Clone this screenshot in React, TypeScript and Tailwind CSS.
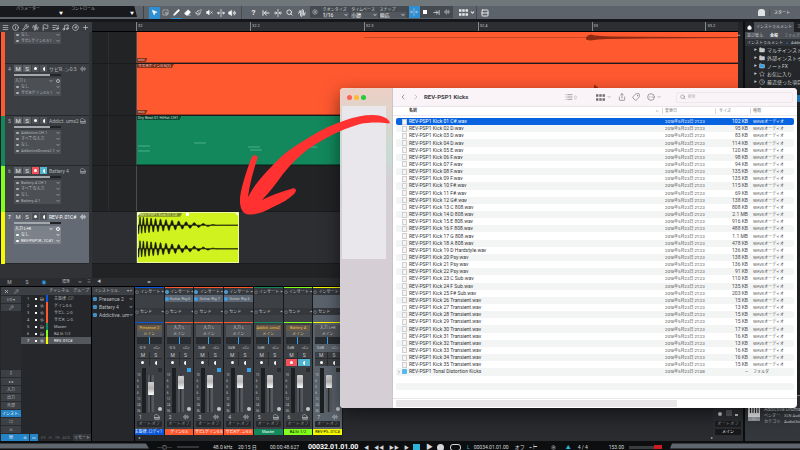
import type { ReactNode } from "react";
import {
  ArrowLeftToLine,
  AudioLines,
  AudioWaveform,
  ChevronLeft,
  ChevronRight,
  ChevronsUpDown,
  ChevronDown,
  ChevronUp,
  CircleEllipsis,
  CircleGauge,
  Clock,
  Eraser,
  Flag,
  FoldHorizontal,
  Folder,
  Home,
  Info,
  List,
  ListMusic,
  Menu,
  MousePointer2,
  Music,
  Paintbrush,
  Pencil,
  Piano,
  Plus,
  Power,
  Rows2,
  Search,
  Settings,
  Share,
  SquareDashedMousePointer,
  Star,
  Tag,
  UnfoldHorizontal,
  Volume2,
  VolumeX,
  Wrench,
  X,
} from "lucide-react";

type Track = {
  no: number;
  name: string;
  height: string;
  color: string;
  fields: string[];
  kind: "audio" | "midi";
  armed?: boolean;
  selected?: boolean;
  partial?: boolean;
};

const tracks: Track[] = [
  { no: 3, name: "サビL..ン0.5", height: "h-[32px]", color: "bg-[#ff5930]", fields: ["なし", "サビLゲイン0.5 1"], kind: "audio", partial: true },
  { no: 4, name: "サビR..ン0.5", height: "h-[52px]", color: "bg-[#ff5930]", fields: ["入力 L", "なし", "サビRゲイン0.5 1"], kind: "audio" },
  { no: 5, name: "Addict..ums2", height: "h-[50px]", color: "bg-[#12885c]", fields: ["Addictive   CH 1", "すべての入力", "なし", "AddictiveDrums2.1"], kind: "midi" },
  { no: 6, name: "Battery 4", height: "h-[46px]", color: "bg-[#83ff1c]", fields: ["Battery 4   CH 1", "すべての入力", "なし", "Battery 4.1"], kind: "midi", armed: true },
  { no: 7, name: "REV-P..01C#", height: "h-[52px]", color: "bg-[#f6fa00]", fields: ["入力 L+R", "なし", "REV-PSP1K..1C#1"], kind: "audio", selected: true },
];

type Channel = {
  no: number;
  list: string;
  label: string;
  top: string;
  color: string;
  text: string;
  instrument?: boolean;
  insert?: string;
  db: string;
  level: number;
  armed?: boolean;
  selected?: boolean;
};

const channels: Channel[] = [
  { no: 1, list: "主旋律..ロ）", label: "主旋律..ロディ）", top: "Presence 2", color: "bg-[#0a57d8]", text: "text-white", instrument: true, db: "-0.9", level: 70 },
  { no: 2, list: "ゲイン0.5", label: "ゲイン0.5", top: "入力 L", color: "bg-[#ff5930]", text: "text-white", insert: "Guitar Rig 6", db: "-0.5", level: 95 },
  { no: 3, list: "サビL..ン0.", label: "サビLゲイン0.5", top: "入力 L", color: "bg-[#ff5930]", text: "text-white", insert: "Guitar Rig 7", db: "0dB", level: 98 },
  { no: 4, list: "サビR..ン0.", label: "サビRゲ..ン0.5", top: "入力 L", color: "bg-[#ff5930]", text: "text-white", insert: "Guitar Rig 6", db: "0dB", level: 98 },
  { no: 5, list: "Master", label: "Master", top: "Addict..ums2", color: "bg-[#12885c]", text: "text-white", instrument: true, db: "0dB", level: 98 },
  { no: 6, list: "B4 St 1/2", label: "B4 St 1/2", top: "Battery 4", color: "bg-[#83ff1c]", text: "text-black", instrument: true, db: "0dB", level: 98, armed: true },
  { no: 7, list: "REV..01C#", label: "REV-PS..01C#", top: "入力 L+R", color: "bg-[#f6fa00]", text: "text-black", db: "0dB", level: 98, selected: true },
];

const files: [string, string][] = [
  ["01 C#", "102 KB"], ["02 D", "95 KB"], ["03 D", "83 KB"], ["04 D", "114 KB"], ["05 E", "120 KB"],
  ["06 F", "98 KB"], ["07 F", "94 KB"], ["08 F", "135 KB"], ["09 F", "135 KB"], ["10 F#", "115 KB"],
  ["11 F#", "69 KB"], ["12 G#", "138 KB"], ["13 C 808", "808 KB"], ["14 D 808", "2.1 MB"], ["15 E 808", "916 KB"],
  ["16 F 808", "488 KB"], ["17 G 808", "1.1 MB"], ["18 A 808", "478 KB"], ["19 D Hardstyle", "136 KB"], ["20 Psy", "138 KB"],
  ["21 Psy", "136 KB"], ["22 Psy", "91 KB"], ["23 C Sub", "110 KB"], ["24 F Sub", "135 KB"], ["25 F# Sub", "203 KB"],
  ["26 Transient", "15 KB"], ["27 Transient", "13 KB"], ["28 Transient", "15 KB"], ["29 Transient", "15 KB"], ["30 Transient", "17 KB"],
  ["31 Transient", "16 KB"], ["32 Transient", "13 KB"], ["33 Transient", "16 KB"], ["34 Transient", "16 KB"], ["35 Transient", "15 KB"],
];

// Damped sine whose period grows from left to right, drawn as filled teeth.
const kickPath = (cy: number) => {
  let d = `M0 ${cy}`;
  let phase = 0;
  for (let x = 0; x <= 102; x += 0.25) {
    phase += (Math.PI * 2 * 0.25) / (3 + x * 0.1);
    const amp = x > 82 ? 0 : 9 * (1 - x / 83);
    d += `L${x} ${(cy + Math.sin(phase) * amp).toFixed(2)}`;
  }
  return d + `L102 ${cy}Z`;
};

const Select = ({ label, value, className = "" }: { label: string; value: string; className?: string }) => (
  <div className={`flex items-center ${className}`}>
    <select aria-label={label} className="h-full min-w-0 flex-1 appearance-none bg-transparent outline-none">
      <option>{value}</option>
    </select>
    <ChevronDown className="size-[4px] shrink-0" strokeWidth={5} />
  </div>
);

const Tool = ({ label, active, children }: { label: string; active?: boolean; children: ReactNode }) => (
  <button aria-label={label} className={`flex h-[12px] w-[11px] items-center justify-center ${active ? "bg-[#2f8fd3]" : ""}`}>
    {children}
  </button>
);

const Tiles = () => (
  <svg viewBox="0 0 11 8" className="h-[7px] w-[9px]" fill="currentColor">
    <path d="M0 0h3v3H0ZM4 0h3v3H4ZM8 0h3v3H8ZM0 5h3v3H0ZM4 5h3v3H4ZM8 5h3v3H8Z" />
  </svg>
);

const TopBar = () => (
  <header className="shrink-0">
    <div className="h-[6px] bg-[#70777a]" />
    <div className="flex h-[13px] bg-[#5d636b] text-[#e8eaec]">
      <div className="flex h-[11px] w-[137px] shrink-0 bg-[#17191c] pl-[16px] text-[4px] text-[#a9adb0] [clip-path:polygon(0_0,98%_0,100%_100%,0_100%)]">
        <div className="flex w-[55px] justify-between pr-2">
          <span>パラメーター</span>
          <span className="self-end leading-[6px] text-white">▼</span>
        </div>
        <div className="flex w-[63px] justify-between">
          <span>コントロール</span>
          <span className="self-end leading-[6px] text-white">▼</span>
        </div>
      </div>
      <div className="ml-[6px] flex w-[98px] shrink-0 items-center border-l border-[#3d4247] pl-[5px]">
        <Tool label="矢印" active><MousePointer2 className="size-[7px] fill-white" /></Tool>
        <Tool label="範囲"><SquareDashedMousePointer className="size-[7px]" /></Tool>
        <button aria-label="分割" className="flex h-[12px] w-[11px] items-center justify-center border-b border-[#2f8fd3]"><Pencil className="size-[7px] fill-white" /></button>
        <Tool label="消しゴム"><Eraser className="size-[7px] fill-white" /></Tool>
        <Tool label="ペイント"><Paintbrush className="size-[7px]" /></Tool>
        <Tool label="ミュート"><VolumeX className="size-[7px] fill-white" /></Tool>
        <Tool label="ベンド"><UnfoldHorizontal className="size-[8px]" strokeWidth={3} /></Tool>
        <Tool label="リッスン"><Volume2 className="size-[8px] fill-white" /></Tool>
      </div>
      <div className="flex w-[69px] shrink-0 items-center gap-[1px] border-l border-[#474c52] pl-[6px]">
        <Tool label="ヘルプ"><span className="text-[8px] font-bold">?</span></Tool>
        <Tool label="先頭"><ArrowLeftToLine className="size-[8px]" strokeWidth={3} /></Tool>
        <Tool label="縮める"><FoldHorizontal className="size-[8px]" strokeWidth={3} /></Tool>
        <Tool label="検索"><Search className="size-[7px]" strokeWidth={3} /></Tool>
        <Tool label="設定"><AudioWaveform className="size-[8px]" strokeWidth={3} /></Tool>
      </div>
      <div className="flex h-[12px] w-[143px] shrink-0 items-center bg-[#454a50] text-[#cfd2d5]">
        <Tool label="クオンタイズ設定"><Settings className="size-[6px]" /></Tool>
        {[["クオンタイズ", "1/16"], ["タイムベース", "小節"], ["スナップ", "順応"]].map(([label, value]) => (
          <div key={label} className="ml-[2px] w-[27px]">
            <div className="h-[5px] text-[4px] leading-[5px] whitespace-nowrap">{label}</div>
            <Select label={label} value={value} className="h-[6px] bg-[#53585e] pr-[1px] text-[#f4f5f6]" />
          </div>
        ))}
        <div className="ml-[3px] flex">
          <Tool label="スナップ" active><UnfoldHorizontal className="size-[8px]" /></Tool>
          <Tool label="停止"><i className="size-[4px] bg-white" /></Tool>
          <Tool label="追従"><ArrowLeftToLine className="size-[7px] rotate-180" strokeWidth={3} /></Tool>
          <Tool label="同期"><AudioLines className="size-[6px]" /></Tool>
        </div>
      </div>
      <div className="flex w-[24px] items-center justify-between border-r border-[#474c52] pr-[1px] pl-[6px]">
        <Tiles />
        <ChevronDown className="size-[5px]" strokeWidth={5} />
      </div>
      <div className="flex flex-1 items-center pr-[10px]">
        <button className="ml-[4px]" aria-label="マクロ"><Rows2 className="size-[8px]" strokeWidth={3} /></button>
        <span className="ml-auto h-[7px] w-[7px] rounded-t-[3px] bg-[#dfe2e4]" />
        <button className="ml-[4px] border-l border-[#4b5056] pl-[4px] text-[4px]">スタート</button>
      </div>
    </div>
    <div className="h-[3px] bg-[#15171a]" />
  </header>
);

const TrackButtons = ({ armed }: { armed?: boolean }) => (
  <div className="flex gap-px text-center text-[6px] leading-[7px] text-[#e4e6e8]">
    <button className="h-[7px] w-[8px] bg-[#5c6065]">M</button>
    <button className="h-[7px] w-[8px] bg-[#5c6065]">S</button>
    <button aria-label="録音" className={`flex h-[7px] w-[7px] items-center justify-center ${armed ? "bg-[#f4525a]" : "bg-[#4e5257]"}`}><i className="size-[3px] rounded-full bg-white" /></button>
    <button aria-label="モニター" className={`flex h-[7px] w-[7px] items-center justify-center ${armed ? "bg-[#4eb4cf]" : "bg-[#4e5257]"}`}><i className="h-[4px] w-[2px] rounded-l-full bg-white" /></button>
  </div>
);

const TrackHeader = ({ track }: { track: Track }) => (
  <div className={`flex w-[84px] shrink-0 border-b border-[#26282b] ${track.selected ? "bg-[#636a73] text-white" : "bg-[#3b3e43] text-[#b0b3b6]"}`}>
    <span className="w-[9px] pt-[2px] text-center">{track.partial ? "" : track.no}</span>
    <div className="min-w-0 flex-1">
      {!track.partial && (
        <>
          <div className="mt-[1px] flex h-[7px] items-center">
            <TrackButtons armed={track.armed} />
            <span className="ml-[2px] w-[31px] overflow-hidden whitespace-nowrap">{track.name}</span>
            {track.kind === "audio" ? <AudioLines className="size-[6px]" /> : <Piano className="size-[6px]" />}
          </div>
          <input
            type="range"
            aria-label={`${track.name} 音量`}
            defaultValue={77}
            className="mt-[2px] mb-[2px] block h-[2px] w-[47px] appearance-none bg-linear-to-r from-[#a4a8ac] from-77% to-[#212326] to-77% [&::-webkit-slider-thumb]:appearance-none"
          />
        </>
      )}
      <div className="w-[47px] text-[4px]">
        {track.fields.map((f, i) => {
          const isInput = track.kind === "audio" && !track.partial && i === 0;
          return (
            <div key={f} className={`flex h-[6px] items-center px-[1px] ${track.selected ? "bg-[#7b828a]" : "bg-[#4c5055]"}`}>
              {!isInput && <i className="mr-[2px] ml-[1px] h-[2px] w-[3px] shrink-0 rounded-[1px] bg-current" />}
              <Select label={f} value={f} className="h-full min-w-0 flex-1" />
              {isInput && <i className="ml-[3px] size-[4px] shrink-0 rounded-full border border-current" />}
            </div>
          );
        })}
      </div>
    </div>
  </div>
);

const ClipTag = ({ children }: { children: ReactNode }) => (
  <span className="w-fit bg-black/45 pr-[3px] pl-[1px] text-[4px] leading-[4px] text-white/75 [clip-path:polygon(0_0,100%_0,calc(100%_-_2px)_100%,0_100%)]">{children}</span>
);

const Clip = ({ track }: { track: Track }) => {
  if (track.no === 7) {
    return (
      <div className="h-full w-[102px] border border-[#eef8a0] bg-[#d0f21f]">
        <svg viewBox="0 0 102 52" className="block h-full w-full" preserveAspectRatio="none">
          <path d="M0 13H102M0 38H102" stroke="#7d9318" strokeWidth=".5" />
          <path d={kickPath(13)} fill="#15180c" stroke="#15180c" strokeWidth=".7" />
          <path d={kickPath(38)} fill="#15180c" stroke="#15180c" strokeWidth=".7" />
          <path d="M0 0h45l-2 4H0Z" fill="#7d8f22" />
          <path d="M49 0h3v3h-3ZM102 0v3l-3-3ZM0 0v3l3-3Z" fill="#fff" />
          <text x="2" y="3.5" fontSize="4" fill="#e8f59a">REV-PSP1 Kick 01 C#</text>
        </svg>
      </div>
    );
  }
  if (track.no === 6) return <div className="h-full flex-1 bg-[#222325]" />;
  if (track.no === 5) {
    return (
      <div className="flex h-full flex-1 flex-col border-b border-[#0a5639] bg-[#12885c]">
        <ClipTag>Dry Beat 01 HiHat CH1</ClipTag>
        <svg viewBox="0 0 200 40" className="h-[40px] w-[200px]">
          <path d="M1 26h12M1 31h12M57 23h12M111 27h12M113 30h12M171 27h9" stroke="#5db995" strokeWidth=".8" />
        </svg>
      </div>
    );
  }
  return (
    <div className={`flex h-full flex-1 flex-col justify-between border-b border-[#a83a22] ${track.color}`}>
      {track.no === 4 ? (
        <>
          <ClipTag>サビRゲイン0.5(2)</ClipTag>
          <svg viewBox="0 0 601 12" className="h-[12px] w-full" preserveAspectRatio="none">
            <path d="M457 5v-2l1-2 1 3 1-1 1 2h3v1h-7Z" fill="#8c2b14" />
          </svg>
        </>
      ) : (
        <svg viewBox="0 0 601 12" className="h-[12px] w-full" preserveAspectRatio="none">
          <path d="M227 5.500H601" stroke="#b5401f" strokeWidth=".7" />
          <path d="M449 5.500l2-2 3-1 4 1 6 .5 10 .5 30 .3 97 .5v.8l-90 .3-40 .5-10 .5-8 1-4-1Z" fill="#8c2b14" />
        </svg>
      )}
      <ClipTag>mic</ClipTag>
    </div>
  );
};

const Arranger = () => (
  <section className="min-w-0 flex-1 bg-[#17191b]">
    <div className="flex h-[10px] text-[#c5c8ca]">
      <div className="flex w-[92px] shrink-0 items-center justify-between bg-[#3a3d41] pr-[3px] pl-[2px]">
        {[Menu, Info, Wrench, AudioWaveform, Flag, ListMusic, Music, CircleGauge, Plus].map((Icon, i) => (
          <button key={i} aria-label={`ツール ${i + 1}`}><Icon className="size-[7px]" strokeWidth={2.5} /></button>
        ))}
      </div>
      <div className="w-[44px] shrink-0 border-b border-black bg-[#212326]" />
      <div className="grid flex-1 grid-cols-[repeat(5,7fr)_2fr] border-b border-black bg-[#2c2e32] text-[4px] leading-[7px]">
        {["32", "32.2", "32.3", "32.4", "33", "33.2"].map((b) => (
          <div key={b} className="flex overflow-hidden border-l border-[#85888b] pl-px">{b}</div>
        ))}
      </div>
    </div>
    {tracks.map((t) => (
      <div key={t.no} className={`flex ${t.height}`}>
        <div className={`ml-px w-[4px] shrink-0 ${t.color}`} />
        <TrackHeader track={t} />
        <div className="w-[3px] shrink-0 bg-[#303236]" />
        <div className={`flex min-w-0 flex-1 border-b border-[#1a1b1d] ${t.selected ? "bg-[#2d2e31]" : "bg-[#222325]"}`}>
          <div className="flex w-[45px] shrink-0 border-r border-[#4b4e51]"><div className="w-[17px] border-r border-[#2c2e30]" /></div>
          <Clip track={t} />
        </div>
      </div>
    ))}
    <div className="flex h-[14px]">
      <div className="w-[92px] bg-[#303235]" />
      <div className="flex-1 bg-[#222325]" />
    </div>
    <div className="flex h-[8px] items-center bg-[#2a2c2f] text-[#b9bcbf]">
      <button className="w-[19px]">M</button>
      <button className="w-[16px]">S</button>
      <button className="w-[18px] text-[#2f9ee0]">◉</button>
      <Select label="表示" value="標準" className="w-[29px] pl-[9px] text-[4px]" />
      <span className="ml-[5px] text-[4px]">≡</span>
      <span className="ml-[6px] text-[4px]">◀</span>
      <span className="ml-[46px] text-[4px]">◂▸</span>
    </div>
  </section>
);

const ChannelStrip = ({ ch }: { ch: Channel }) => (
  <div className={`flex min-w-0 flex-col overflow-hidden border-r border-[#16181a] text-[#c6c9cb] ${ch.selected ? "bg-[#5a626c]" : "bg-[#3d4044]"}`}>
    <div className={`h-px shrink-0 ${ch.color}`} />
    <div className="flex h-[7px] items-center justify-between bg-[#35383c] text-[4px] whitespace-nowrap">
      <Power className={`size-[4px] shrink-0 ${ch.insert ? "rounded-full bg-[#2f8fd3]" : ""}`} />
      <span>インサート</span>
      <span>+</span>
    </div>
    <div className={`flex h-[7px] items-center text-[4px] whitespace-nowrap ${ch.insert ? "bg-[#5a6673]" : ""}`}>
      {ch.insert && (
        <>
          <i className="mr-px size-[4px] shrink-0 rounded-full bg-[#3aa0e6]" />
          {ch.insert}
        </>
      )}
    </div>
    <div className="mt-[6px] flex h-[7px] items-center gap-px bg-[#35383c] text-[4px]">
      <Power className="size-[4px] shrink-0" />
      <span className="flex-1">センド</span>
      <span>+</span>
    </div>
    <div className="h-[7px]" />
    <div className={`h-px shrink-0 ${ch.color}`} />
    <div className="mx-[2px] mt-[2px] bg-[#515459] text-center whitespace-nowrap">
      <div className={`h-[6px] text-[4px] leading-[6px] ${ch.instrument ? "bg-[#62594a] text-[#f0bf4c]" : ""}`}>{ch.top}</div>
      <div className={`h-[6px] text-[4px] leading-[6px] ${ch.instrument ? "text-[#e0c06a]" : ""}`}>メイン</div>
    </div>
    <div className="mx-[2px] flex h-[7px] justify-center bg-[#282c31]"><i className="w-px bg-[#3aa0e6]" /></div>
    <div className="flex h-[8px] items-center justify-around text-[4px]">
      <span>{ch.db}</span>
      <span>&lt;C&gt;</span>
    </div>
    <div className="mx-[2px] grid shrink-0 grid-cols-2 gap-px rounded-[1px] bg-[#2a2c2f] text-center leading-[6px]">
      <button className="h-[6px] bg-[#3d4044]">M</button>
      <button className="h-[6px] bg-[#3d4044]">S</button>
      <button aria-label="録音" className={`flex h-[7px] items-center justify-center ${ch.armed ? "bg-[#f4525a]" : "bg-[#3d4044]"}`}><i className="size-[3px] rounded-full bg-white" /></button>
      <button aria-label="モニター" className={`flex h-[7px] items-center justify-center ${ch.armed ? "bg-[#4eb4cf]" : "bg-[#3d4044]"}`}><i className="h-[4px] w-[2px] rounded-l-full bg-white" /></button>
    </div>
    <div className="mx-[2px] mt-[2px] flex h-[45px] shrink-0">
      <div className="flex w-[4px] flex-col justify-between pt-[5px] text-[3px] leading-[4px]">
        {["10", "6", "0", "6", "12", "24", "36"].map((n, i) => <span key={i}>{n}</span>)}
      </div>
      <div className="ml-px w-[4px] bg-[#1d2023]" />
      <input
        type="range"
        aria-label={`${ch.label} フェーダー`}
        defaultValue={ch.level}
        className="mt-[7px] ml-[2px] block h-[37px] w-[6px] appearance-none bg-linear-to-r from-[#55585c] from-34% via-[#1d2023] via-34% to-[#55585c] to-67% [direction:rtl] [writing-mode:vertical-lr] [&::-webkit-slider-thumb]:h-[13px] [&::-webkit-slider-thumb]:w-[6px] [&::-webkit-slider-thumb]:appearance-none [&::-webkit-slider-thumb]:rounded-[1px] [&::-webkit-slider-thumb]:bg-linear-to-b [&::-webkit-slider-thumb]:from-[#cfcfcf] [&::-webkit-slider-thumb]:via-[#b4b4b4] [&::-webkit-slider-thumb]:to-white"
      />
      <div className="ml-auto flex flex-col justify-between pb-[2px]">
        <i className={`h-[4px] w-[4px] ${ch.insert ? "bg-[#3aa0e6]" : "bg-[#2a2c2f]"}`} />
        <i className="size-[4px] rounded-full bg-[#c6c9cb]" />
      </div>
    </div>
    <div className="flex h-[7px] items-center justify-between px-[4px]">
      <span>{ch.no}</span>
      {ch.instrument ? <Piano className="size-[6px]" /> : <AudioLines className="size-[6px]" />}
    </div>
    <button className="mx-[2px] mt-px h-[6px] shrink-0 rounded-[1px] bg-[#26282b] text-[4px] leading-[6px] whitespace-nowrap text-[#85898d]">オート:オフ</button>
    <div className={`mt-[2px] flex h-[6px] shrink-0 items-center justify-center text-[4px] leading-[6px] whitespace-nowrap ${ch.color} ${ch.text}`}>{ch.label}</div>
  </div>
);

const sideTabs = ["↕", "▸◂", "入力", "出力", "外部", "インスト..", "❐", "ılı", "▤"];

const Mixer = () => (
  <section className="flex h-[155px] shrink-0 border-t border-black bg-[#25272a] text-[#b9bcbf]">
    <nav className="ml-px flex w-[20px] shrink-0 flex-col bg-[#292b2f] text-center text-[4px] leading-[7px]">
      <div className="flex h-[8px] items-center justify-around bg-[#3d4044]"><X className="size-[5px]" strokeWidth={4} /><Wrench className="size-[5px]" /></div>
      <button className="mt-px h-[7px] bg-[#3d4044]">I/O ▾</button>
      <button className="mt-px h-[7px] bg-[#3d4044]" aria-label="ツール"><Wrench className="mx-auto size-[5px]" /></button>
      <div className="mt-auto">
        {sideTabs.map((s) => (
          <button key={s} className={`mt-px block h-[7px] w-full whitespace-nowrap ${s === "インスト.." || s === "▤" ? "bg-[#2584c6] text-white" : "bg-[#3d4044]"}`}>{s}</button>
        ))}
      </div>
    </nav>
    <div className="flex w-[71px] shrink-0 flex-col border-r border-black text-[4px]">
      <div className="flex h-[8px] items-center justify-end gap-[4px] bg-[#3d4044] pr-[2px] whitespace-nowrap"><span>チャンネル</span><span>グループ</span></div>
      {channels.map((ch) => (
        <div key={ch.no} className={`flex h-[7px] items-center leading-[7px] ${ch.selected ? "bg-[#55585d] text-white" : ""}`}>
          <span className="w-[14px] text-center">{ch.no}</span>
          <i className="size-[2px] bg-white" />
          <span className="flex w-[9px] justify-center">{ch.instrument ? <Piano className="size-[4px]" /> : <AudioWaveform className="size-[4px]" />}</span>
          <i className={`h-[7px] w-[2px] ${ch.color}`} />
          <span className="ml-[6px] flex-1 whitespace-nowrap">{ch.list}</span>
        </div>
      ))}
      <div className="mt-auto flex h-[7px] leading-[7px] text-[#66696d]">
        <button className="w-[8px] shrink-0 bg-[#2584c6] text-white">ılı</button>
        <button className="ml-px w-[8px] shrink-0 bg-[#2584c6] text-white">▭</button>
        <span className="flex flex-1 justify-between px-[3px]"><span>FX</span><span>I+</span><span>1R</span><span>AUX</span></span>
        <button className="w-[18px] shrink-0 bg-[#34373b] whitespace-nowrap text-[#c6c9cb]">リモート</button>
      </div>
    </div>
    <div className="w-[43px] shrink-0 border-r border-black">
      <div className="flex h-[8px] items-center bg-[#3d4044] px-[2px] text-[4px]"><span className="flex-1">インストゥル..</span><span>▾ +</span></div>
      {["Presence 2", "Battery 4", "Addictive..ums2"].map((s) => (
        <div key={s} className="flex h-[8px] items-center gap-[2px] px-[1px] text-[5px]">
          <Power className="size-[4px] shrink-0 rounded-[1px] bg-[#2584c6]" />
          <Select label={s} value={s} className="min-w-0 flex-1" />
        </div>
      ))}
    </div>
    <div className="flex w-[208px] shrink-0 flex-col">
      <div className="grid grid-cols-7">
        {channels.map((ch) => <ChannelStrip key={ch.no} ch={ch} />)}
      </div>
      <span className="pl-[3px] text-[4px] leading-[5px]">◂</span>
    </div>
    <div className="flex flex-1 items-end justify-end bg-linear-to-b from-[#1d1e21] to-[#2a2c30] text-[4px]">▸</div>
    <div className="flex w-[30px] shrink-0 flex-col justify-end bg-[#2c2e32] px-[2px] pb-[6px] text-center">
      <div className="mb-[5px] flex items-end justify-between px-[3px]"><i className="size-[4px] rounded-full bg-[#c6c9cb]" /><i className="h-[6px] w-[6px] bg-[#56595e]" /><i className="h-[2px] w-[3px] bg-[#c6c9cb]" /></div>
      <button className="h-[6px] bg-[#1b1d1f] text-[4px] leading-[6px] whitespace-nowrap text-[#85898d]">オート:オフ</button>
      <span className="mt-[2px] bg-[#17191b] text-[4px] leading-[6px] text-white">メイン</span>
    </div>
  </section>
);

const tree: [string, typeof Folder, string][] = [
  ["マルチインストゥルメント", Folder, "fill-[#c6c9cb]"],
  ["外部インストゥルメント", Folder, "fill-[#c6c9cb]"],
  ["ノートFX", Folder, "fill-[#3aa0e6]"],
  ["お気に入り", Star, ""],
  ["最近使った項目", Clock, ""],
  ["PreSonus", Folder, "fill-[#c6c9cb]"],
];

const Browser = () => (
  <aside className="flex w-[57px] shrink-0 flex-col overflow-hidden border-l-2 border-[#0c0d0e] bg-[#25272a] whitespace-nowrap text-[#c9ccce]">
    <div className="flex h-[10px] shrink-0 items-center bg-[#1e2023] text-[4px]">
      <Home className="mx-[2px] size-[5px] shrink-0 fill-white" />
      <button className="h-full shrink-0 bg-[#4b4f55] px-[2px]">インストゥルメント</button>
      <button className="ml-[3px]">エフェクト</button>
    </div>
    <div className="flex h-[7px] shrink-0 items-center gap-[6px] bg-[#4b4f55] pl-[2px] text-[4px]"><span>並び替え:</span><span className="font-bold text-white">全般</span><span className="text-[#989ca0]">フォルダー</span></div>
    <div className="flex h-[7px] shrink-0 items-center gap-[3px] bg-[#303338] pl-[2px] text-[4px]"><span>インストゥルメント</span><span className="text-[#3aa0e6]">&gt;</span><span>Addictive</span></div>
    {tree.map(([name, Icon, fill]) => (
      <div key={name} className="flex h-[8px] shrink-0 items-center gap-[2px] pl-[9px]">
        <span className="text-[3px]">▶</span>
        <Icon className={`size-[6px] shrink-0 ${fill}`} />
        <span>{name}</span>
      </div>
    ))}
    <div className="mt-[1px] h-[7px] shrink-0 bg-[#2584c6]" />
    <div className="mt-auto flex h-[46px] shrink-0 gap-[4px] border-t border-[#96999c] bg-[#34373c] pt-[10px] pl-[3px]">
      <div className="h-[15px] w-[12px] shrink-0 bg-[#9a9ea2] text-center text-[3px] leading-[4px]">
        <svg viewBox="0 0 12 11" className="block h-[11px] w-[12px]">
          <path fill="#f2f3f4" d="M0 0h12v11H0Z" />
          <path stroke="#2b2d30" strokeWidth="1.200" d="M2.500 0v7M5 0v7M7.500 0v7M10 0v7" />
        </svg>
        AU
      </div>
      <div className="leading-[6px]">
        <div className="text-[5px]">Addictive Drums 2</div>
        <div className="pt-[1px] text-[4px]">ベンダー: &nbsp; XLN Audio</div>
        <div className="text-[4px]">カテゴリ: &nbsp; AudioUnit</div>
      </div>
    </div>
  </aside>
);

const Transport = () => (
  <footer className="relative flex h-[9px] shrink-0 items-center overflow-hidden bg-[#0d0e0f] pt-[3px] whitespace-nowrap text-[#d5d8da]">
    <div className="-mt-[3px] h-full w-[149px] shrink-0 bg-[#60666e] [clip-path:polygon(0_15%,98%_15%,100%_100%,0_100%)]" />
    <div className="flex flex-1 items-center">
      <span className="ml-[8px] w-[20px]">─◎─</span>
      <i className="h-[2px] w-[22px] bg-[#33363a]" />
      <span className="ml-[14px] w-[25px] shrink-0">48.0 kHz</span>
      <span className="w-[32px] shrink-0">20:15 日</span>
      <span className="w-[38px] shrink-0">00:00:48.627</span>
      <span className="w-[56px] shrink-0 text-[7px] font-bold text-white">00032.01.01.00</span>
      <span className="flex w-[49px] gap-[5px]"><span>◀</span><span>◀◀</span><span>▶▶</span><span>▶</span></span>
      <button aria-label="停止" className="h-[7px] w-[7px] bg-[#2cb3dc]" />
      <button aria-label="再生" className="ml-[6px] text-[7px]">▶</button>
      <button aria-label="録音" className="ml-[4px] size-[7px] rounded-full bg-[#d5d8da]" />
      <button aria-label="ループ" className="ml-[6px] h-[7px] w-[11px] rounded-[3px] border border-[#d5d8da]" />
      <span className="ml-[6px] text-[#2cb3dc]">L</span>
      <span className="ml-[4px] w-[41px]">00034.01.01.00</span>
      <span className="w-[14px]">オフ</span>
      <span className="w-[22px]">⌁ ⊢</span>
      <Settings className="size-[5px]" />
      <span className="ml-[10px] text-[#2cb3dc]">▲</span>
      <span className="ml-[7px] w-[31px]">4 / 4</span>
      <span className="w-[20px]">153.00</span>
      <i className="h-[3px] w-[25px] bg-[#3a3c40]" />
      <i className="h-[4px] w-[8px] bg-[#cf1c22]" />
    </div>
    <div className="-mt-[3px] h-full w-[130px] shrink-0 bg-[#60666e] [clip-path:polygon(1.500%_15%,100%_15%,100%_100%,0_100%)]" />
  </footer>
);

const columns = "grid grid-cols-[1fr_53px_35px_44px] items-center";

const Finder = () => (
  <div className="absolute top-[88px] right-[3px] left-[340px] flex h-[320px] overflow-hidden rounded-[4px] bg-white text-[#4c4c4e] shadow-[0_6px_18px_rgba(0,0,0,0.5)]">
    <div className="w-[53px] shrink-0 border-r border-[#cbc4cb] bg-linear-to-b from-[#edcfc5] via-[#c6dcd3] via-20% to-[#d5ced5] to-30%">
      <div className="flex gap-[2px] pt-[7px] pl-[7px]">
        <button aria-label="閉じる" className="size-[5px] rounded-full bg-[#fe5f57]" />
        <button aria-label="しまう" className="size-[5px] rounded-full bg-[#febb2e]" />
        <button aria-label="拡大" className="size-[5px] rounded-full bg-[#28c840]" />
      </div>
      <div className="mt-[6px] ml-[2px] h-[153px] w-[44px] bg-[#e9e7eb]" />
    </div>
    <div className="flex min-w-0 flex-1 flex-col">
      <div className="flex h-[19px] shrink-0 items-center border-b border-[#eae4e8] bg-[#faf3f8] pl-[6px] text-[#737175]">
        <button aria-label="戻る"><ChevronLeft className="size-[8px]" /></button>
        <button aria-label="進む" className="ml-[5px]"><ChevronRight className="size-[8px] text-[#aaa7ab]" /></button>
        <h1 className="ml-[4px] flex-1 text-[6px] font-bold text-[#403e42]">REV-PSP1 Kicks</h1>
        <button aria-label="リスト表示" className="mr-[18px] flex items-center"><List className="size-[8px]" /><ChevronsUpDown className="size-[5px]" /></button>
        <button aria-label="グループ" className="mr-[7px] flex items-center gap-[2px]"><Tiles /><ChevronDown className="size-[4px]" strokeWidth={3} /></button>
        <button aria-label="共有" className="mr-[6px]"><Share className="size-[8px]" /></button>
        <button aria-label="タグ" className="mr-[7px]"><Tag className="size-[8px] rotate-90" /></button>
        <button aria-label="その他" className="mr-[15px] flex items-center gap-[2px]"><CircleEllipsis className="size-[8px]" /><ChevronDown className="size-[4px]" strokeWidth={3} /></button>
        <label className="mr-[4px] flex h-[11px] w-[117px] items-center gap-[2px] rounded-[2px] border border-[#eee7ec] pl-[3px]">
          <Search className="size-[6px]" />
          <input type="search" aria-label="検索" placeholder="検索" className="w-full bg-transparent text-[4px] outline-none placeholder:text-[#b9b5ba]" />
        </label>
      </div>
      <table className="block text-[5px]">
        <thead className="block border-b border-[#eceaec] px-[3px]">
          <tr className={`${columns} h-[8px] text-left text-[4px] text-[#7a7a7c]`}>
            <th className="flex items-center justify-between pr-[3px] pl-[13px] font-bold text-[#333]">名前<ChevronUp className="size-[4px]" /></th>
            <th className="border-l border-[#dddbdd] pl-[2px] font-normal">変更日</th>
            <th className="border-l border-[#dddbdd] pl-[3px] font-normal">サイズ</th>
            <th className="border-l border-[#dddbdd] pl-[2px] font-normal">種類</th>
          </tr>
        </thead>
        <tbody className="mx-[3px] mt-[2px] grid h-[279px] grid-rows-[repeat(39,1fr)] leading-[7px] whitespace-nowrap">
          {files.map(([name, size], i) => (
            <tr key={name} className={`${columns} rounded-[2px] ${i === 0 ? "bg-[#0763e0] text-white" : "even:bg-[#f3f4f4]"}`}>
              <td className="flex items-center pl-[6px]">
                <i className="mr-[2px] h-[6px] w-[5px] border border-[#cfcfd1] bg-[#f5f5f6]" />
                <span className={i === 0 ? "" : "text-[#353537]"}>REV-PSP1 Kick {name}.wav</span>
              </td>
              <td className="pl-[3px] font-['Inter','Noto_Sans_CJK_JP',sans-serif] text-[4px]">2018年5月23日 21:23</td>
              <td className="pr-[2px] text-right">{size}</td>
              <td className="pl-[3px] font-['Inter','Noto_Sans_CJK_JP',sans-serif] text-[4px]">WAVEオーディオ</td>
            </tr>
          ))}
          <tr className={`${columns} rounded-[2px] bg-[#f3f4f4]`}>
            <td className="flex items-center pl-[1px] text-[#353537]">
              <ChevronRight className="mr-px size-[4px]" />
              <i className="mr-[2px] h-[5px] w-[5px] rounded-[1px] bg-[#55b9ee]" />
              REV-PSP1 Tonal Distortion Kicks
            </td>
            <td className="pl-[3px] font-['Inter','Noto_Sans_CJK_JP',sans-serif] text-[4px]">2018年5月23日 21:09</td>
            <td className="pr-[2px] text-right">--</td>
            <td className="pl-[3px] text-[4px]">フォルダ</td>
          </tr>
          <tr />
          <tr className="rounded-[2px] bg-[#f3f4f4]" />
          <tr />
        </tbody>
      </table>
      <div className="mt-auto h-[10px] border-t border-[#e9e7e9] pt-[1px] pl-[3px]">
        <div className="h-[7px] w-[70%] bg-[#e8e6e9]" />
      </div>
    </div>
  </div>
);

const DragArrow = () => (
  <svg viewBox="0 0 152 102" className="pointer-events-none absolute top-[114px] left-[239px] h-[102px] w-[152px]" aria-hidden="true">
    <path
      fill="#ff3131"
      d="M151 9C150 4 142 1 134 1C124 1 115 3 107 6C92 11 82 16 74 21C61 29 50 35 41 44C31 54 24 61 18 69C14 74 12 78 9 83C11 68 15 55 18.500 44C19 41 14 40 12.500 44C8 55 5 65 3 73C1 81 0 88 2 94C4 100 8 101 13 100.500C20 100 27 97 34 93C43 89 50 85 55 80C59 76 56 73 52 75C45 77 39 79 34 81C30 83 26 84 23 86C30 79 36 71 44 60C51 51 59 43 68 36C75 31 83 26 91 22C100 17 111 13 121 10C131 8 141 8 149 9.500Z"
    />
  </svg>
);

export default function App() {
  return (
    <main className="relative flex h-screen flex-col overflow-hidden bg-[#111] font-['Roboto','Noto_Sans_CJK_JP',sans-serif] text-[5px] leading-[6px]">
      <TopBar />
      <div className="flex min-h-0 flex-1">
        <div className="flex min-w-0 flex-1 flex-col">
          <div className="flex min-h-0 flex-1">
            <Arranger />
            <div className="w-[5px] shrink-0 bg-[#222427] pt-[10px] text-[4px] text-[#a4a8ac]">▴</div>
          </div>
          <Mixer />
        </div>
        <Browser />
      </div>
      <Transport />
      <Finder />
      <DragArrow />
    </main>
  );
}
